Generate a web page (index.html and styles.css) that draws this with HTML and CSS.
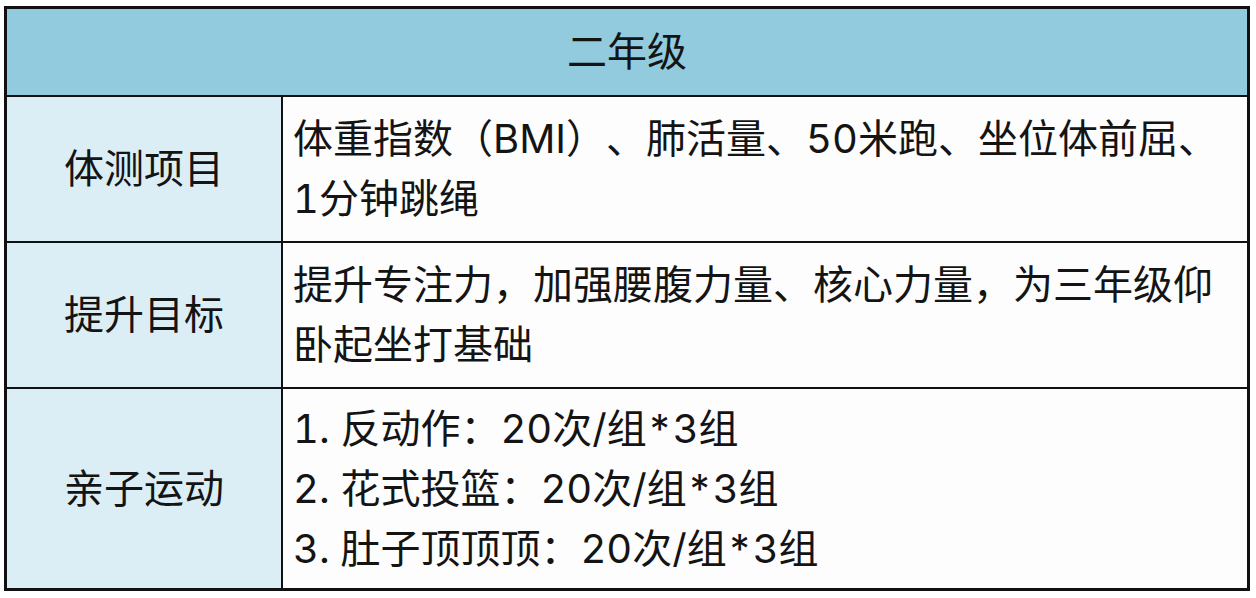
FILE: index.html
```html
<!DOCTYPE html>
<html lang="zh-CN">
<head>
<meta charset="utf-8">
<title>二年级</title>
<link rel="stylesheet" href="styles.css">
</head>
<body>
<div class="sheet">
  <div class="cell head">二年级</div>
  <div class="cell label">体测项目</div>
  <div class="cell body">体重指数（BMI）、肺活量、50米跑、坐位体前屈、<br>1分钟跳绳</div>
  <div class="cell label">提升目标</div>
  <div class="cell body">提升专注力，加强腰腹力量、核心力量，为三年级仰<br>卧起坐打基础</div>
  <div class="cell label">亲子运动</div>
  <div class="cell body">1. 反动作：20次/组*3组<br>2. 花式投篮：20次/组*3组<br>3. 肚子顶顶顶：20次/组*3组</div>
</div>
</body>
</html>
```
FILE: styles.css
```css
html, body {
  background: #ffffff;
}
body {
  margin: 6px 6px 0 4px;
  font-family: Inter, "Noto Sans CJK SC", sans-serif;
  font-feature-settings: "tnum";
  color: #141414;
  text-spacing-trim: space-all;
}
.sheet {
  box-sizing: border-box;
  width: 1246px;
  display: grid;
  grid-template-columns: 274px 1fr;
  grid-template-rows: 86px 144px 144px 199px;
  gap: 2px;
  border: 3px solid #111111;
  background: #111111;
}
.cell {
  display: flex;
  align-items: center;
  font-size: 40px;
  line-height: 60px;
}
.head {
  grid-column: 1 / span 2;
  justify-content: center;
  background: #91cbdd;
}
.label {
  justify-content: center;
  background: #dbedf5;
}
.body {
  background: #fdfdfd;
  padding-left: 10px;
}
```
